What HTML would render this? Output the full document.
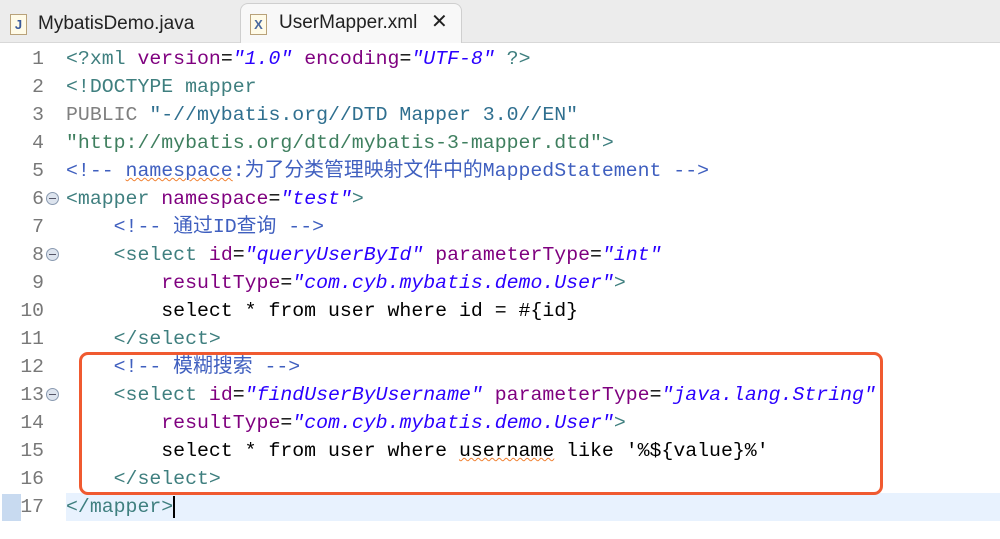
<!DOCTYPE html>
<html><head><meta charset="utf-8"><style>
body{margin:0;width:1000px;height:539px;background:#fff;overflow:hidden;position:relative;font-family:"Liberation Sans",sans-serif}
.tabs{position:absolute;left:0;top:0;width:1000px;height:42px;background:#ececec;border-bottom:1px solid #d8d8d8}
.tab{position:absolute;top:5px;height:37px;font-size:19px;line-height:37px;color:#222}
.t2{left:240px;width:220px;background:#f8f8f8;border:1px solid #cfcfcf;border-bottom:none;border-radius:8px 8px 0 0;top:3px;height:39px}
.ic{position:absolute;width:15px;height:19px;border:1px solid #b9a27a;background:#fffbe8;font-size:13px;line-height:19px;text-align:center;color:#3a5a9a;font-weight:bold}
.code{position:absolute;left:0;top:45px;font-family:"Liberation Mono","Noto Sans CJK SC",monospace;font-size:19.85px}
.l{height:28px;line-height:28px;white-space:pre;position:relative}
.n{display:inline-block;width:44px;text-align:right;color:#787878;margin-right:22px;font-size:19.7px}
.t{color:#3f7f7f}.a{color:#7f007f}.v{color:#2a00ff;font-style:italic}.c{color:#3f5fbf}.k{color:#000}
.fold{position:absolute;left:46px;top:7px;width:11px;height:11px;border:1px solid #8a9ab0;border-radius:50%;background:#dde4ee}
.fold:after{content:"";position:absolute;left:2px;top:5px;width:7px;height:1px;background:#556}
.sq{text-decoration:underline wavy #f08030;text-decoration-thickness:1px}
</style></head><body>
<div class="tabs">
<div class="tab" style="left:10px"><span class="ic" style="left:0;top:9px">J</span><span style="position:absolute;left:28px;white-space:nowrap">MybatisDemo.java</span></div>
<div class="tab t2"><span class="ic" style="left:9px;top:10px;color:#4a6aa0">X</span><span style="position:absolute;left:38px;white-space:nowrap">UserMapper.xml</span><span style="position:absolute;left:190px;font-size:20px">✕</span></div>
</div>
<div style="position:absolute;left:66px;top:493px;width:934px;height:28px;background:#e8f2fe"></div>
<div style="position:absolute;left:2px;top:494px;width:19px;height:27px;background:#c8daf0"></div>
<div class="code">
<div class="l"><span class="n">1</span><span class="t">&lt;?xml </span><span class="a">version</span>=<span class="v">"1.0"</span> <span class="a">encoding</span>=<span class="v">"UTF-8"</span><span class="t"> ?&gt;</span></div>
<div class="l"><span class="n">2</span><span class="t">&lt;!DOCTYPE mapper</span></div>
<div class="l"><span class="n">3</span><span style="color:#808080">PUBLIC </span><span style="color:#2f6f8f">"-//mybatis.org//DTD Mapper 3.0//EN"</span></div>
<div class="l"><span class="n">4</span><span style="color:#3f7f5f">"http://mybatis.org/dtd/mybatis-3-mapper.dtd"</span><span class="t">&gt;</span></div>
<div class="l"><span class="n">5</span><span class="c">&lt;!-- <span class="sq">namespace</span>:为了分类管理映射文件中的MappedStatement --&gt;</span></div>
<div class="l"><span class="n">6</span><span class="fold"></span><span class="t">&lt;mapper </span><span class="a">namespace</span>=<span class="v">"test"</span><span class="t">&gt;</span></div>
<div class="l"><span class="n">7</span>    <span class="c">&lt;!-- 通过ID查询 --&gt;</span></div>
<div class="l"><span class="n">8</span><span class="fold"></span>    <span class="t">&lt;select </span><span class="a">id</span>=<span class="v">"queryUserById"</span> <span class="a">parameterType</span>=<span class="v">"int"</span></div>
<div class="l"><span class="n">9</span>        <span class="a">resultType</span>=<span class="v">"com.cyb.mybatis.demo.User"</span><span class="t">&gt;</span></div>
<div class="l"><span class="n">10</span>        select * from user where id = #{id}</div>
<div class="l"><span class="n">11</span>    <span class="t">&lt;/select&gt;</span></div>
<div class="l"><span class="n">12</span>    <span class="c">&lt;!-- 模糊搜索 --&gt;</span></div>
<div class="l"><span class="n">13</span><span class="fold"></span>    <span class="t">&lt;select </span><span class="a">id</span>=<span class="v">"findUserByUsername"</span> <span class="a">parameterType</span>=<span class="v">"java.lang.String"</span></div>
<div class="l"><span class="n">14</span>        <span class="a">resultType</span>=<span class="v">"com.cyb.mybatis.demo.User"</span><span class="t">&gt;</span></div>
<div class="l"><span class="n">15</span>        select * from user where <span class="sq">username</span> like '%${value}%'</div>
<div class="l"><span class="n">16</span>    <span class="t">&lt;/select&gt;</span></div>
<div class="l"><span class="n">17</span><span class="t">&lt;/mapper&gt;</span><span style="display:inline-block;width:2px;height:22px;background:#000;vertical-align:middle"></span></div>
</div>
<div style="position:absolute;left:79px;top:352px;width:798px;height:137px;border:3px solid #f05a30;border-radius:9px"></div>
</body></html>
